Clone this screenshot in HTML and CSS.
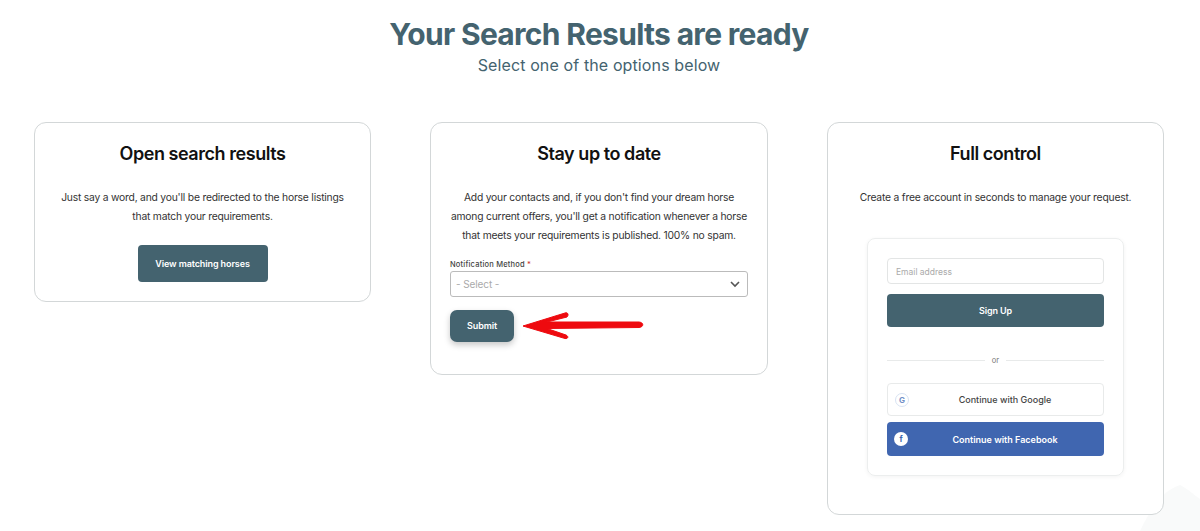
FILE: index.html
```html
<!DOCTYPE html>
<html lang="en">
<head>
<meta charset="utf-8">
<title>Your Search Results are ready</title>
<link rel="stylesheet" href="styles.css">
</head>
<body>
<main class="page">
  <svg class="blot" width="60" height="50" viewBox="0 0 60 50"><path d="M0 50 C8 34 20 10 40 4 C48 8 54 14 60 18 L60 50 Z" fill="#f9fafa"/></svg>
  <header class="hero">
    <h1>Your Search Results are ready</h1>
    <p>Select one of the options below</p>
  </header>
  <section class="cards">
    <article class="card">
      <h2>Open search results</h2>
      <p class="copy">Just say a word, and you'll be redirected to the horse listings that match your requirements.</p>
      <div class="center"><a class="btn view">View matching horses</a></div>
    </article>
    <article class="card card-mid">
      <h2>Stay up to date</h2>
      <p class="copy">Add your contacts and, if you don't find your dream horse among current offers, you'll get a notification whenever a horse that meets your requirements is published. 100% no spam.</p>
      <div class="label">Notification Method <span class="req">*</span></div>
      <div class="select">
        <span>- Select -</span>
        <svg width="10" height="7" viewBox="0 0 10 7"><path d="M1 1l4 4 4-4" fill="none" stroke="#555" stroke-width="1.6"/></svg>
      </div>
      <a class="btn submit">Submit</a>
      <svg class="arrow" width="124" height="32" viewBox="0 0 124 32"><path d="M2 16 L44 3 C47 2 48 5 46 7 L26 12 L118 12 C123 12.500 123 17 118 17.500 L26 18.500 L45 25 C48 26.500 47 29 44 28.500 Z" fill="#ee0a0f" stroke="#ee0a0f" stroke-linejoin="round"/></svg>
    </article>
    <article class="card">
      <h2>Full control</h2>
      <p class="copy copy-one">Create a free account in seconds to manage your request.</p>
      <div class="signup">
        <div class="email">Email address</div>
        <a class="btn signup-btn">Sign Up</a>
        <div class="divider"><span>or</span></div>
        <a class="social google">
          <span class="badge badge-g">G</span>
          <span>Continue with Google</span>
        </a>
        <a class="social facebook">
          <span class="badge badge-f">f</span>
          <span>Continue with Facebook</span>
        </a>
      </div>
    </article>
  </section>
</main>
</body>
</html>
```
FILE: styles.css
```css
* { box-sizing: border-box; }
html, body { margin: 0; height: 100%; background: #fff; }
body { font-family: Inter, "Liberation Sans", sans-serif; color: #222; overflow: hidden; }
.page { position: relative; height: 531px; padding: 15px 36px 0 34px; overflow: hidden; }
.hero { position: relative; text-align: center; color: #44636f; height: 107px; }
.hero h1 { margin: 0; font-size: 30px; line-height: 38px; font-weight: 700; letter-spacing: -0.69px; }
.hero p { margin: 0; font-size: 16px; line-height: 24px; letter-spacing: 0.12px; }
.cards { position: relative; display: grid; grid-template-columns: 337px 338px 337px; column-gap: 59px; align-items: start; }
.card { position: relative; background: #fff; border: 1px solid #d3d7d8; border-radius: 12px; padding: 19px 19px 0; }
.card:nth-child(1) { height: 180px; }
.card-mid { height: 253px; }
.card:nth-child(3) { height: 393px; }
.card h2 { margin: 0 0 22px; text-align: center; font-size: 18px; line-height: 24px; font-weight: 600; color: #111; letter-spacing: -0.45px; }
.copy { margin: 0 0 19px; text-align: center; font-size: 10.300px; line-height: 19px; color: #333; letter-spacing: -0.2px; }
.copy-one { margin-bottom: 31px; }
.center { display: flex; justify-content: center; }
.btn { display: flex; align-items: center; justify-content: center; background: #44636f; color: #fff; font-size: 9px; font-weight: 600; letter-spacing: -0.1px; border-radius: 4px; }
.view { width: 130px; height: 37px; }
.label { font-size: 7.500px; line-height: 10px; font-weight: 500; letter-spacing: 0.2px; color: #444; margin-top: -4px; margin-bottom: 1px; }
.req { color: #c33; }
.select { display: flex; align-items: center; justify-content: space-between; height: 26px; padding: 0 7px 0 5px; border: 1px solid #bbb; border-radius: 3px; font-size: 10px; letter-spacing: -0.1px; color: #aaa; }
.submit { width: 64px; height: 32px; margin-top: 13px; border-radius: 7px; box-shadow: 0 3px 6px rgba(0,0,0,0.22); padding-bottom: 1px; }
.arrow { position: absolute; left: 90px; top: 187px; }
.signup { margin: 0 20px; padding: 19px 19px 0; height: 238px; border: 1px solid #eceeee; border-radius: 8px; box-shadow: 0 1px 4px rgba(0,0,0,0.05); }
.email { height: 26px; padding: 0 8px; border: 1px solid #e3e5e5; border-radius: 4px; font-size: 8.500px; line-height: 26px; color: #aaa; }
.signup-btn { height: 33px; margin-top: 10px; }
.divider { position: relative; display: flex; justify-content: center; margin-top: 28px; height: 11px; font-size: 7.500px; line-height: 11px; color: #777; }
.divider::before { content: ""; position: absolute; left: 0; right: 0; top: 5px; border-top: 1px solid #e8eaea; }
.divider span { position: relative; background: #fff; padding: 0 7px; }
.social { position: relative; display: flex; align-items: center; justify-content: center; border-radius: 4px; font-size: 9px; font-weight: 500; padding-left: 19px; }
.google { height: 33px; margin-top: 17px; border: 1px solid #e8eaea; color: #444; }
.facebook { height: 34px; margin-top: 6px; background: #4066b0; color: #fff; font-weight: 600; }
.badge { position: absolute; left: 7px; top: 50%; width: 14px; height: 14px; margin-top: -7px; border-radius: 50%; display: flex; align-items: center; justify-content: center; font-size: 8px; font-weight: 700; }
.badge-g { background: #fff; border: 1px solid #d8e3f3; color: #6f8fc6; }
.badge-f { background: #fff; color: #4066b0; }
.blot { position: absolute; right: 0; bottom: 0; }
```
